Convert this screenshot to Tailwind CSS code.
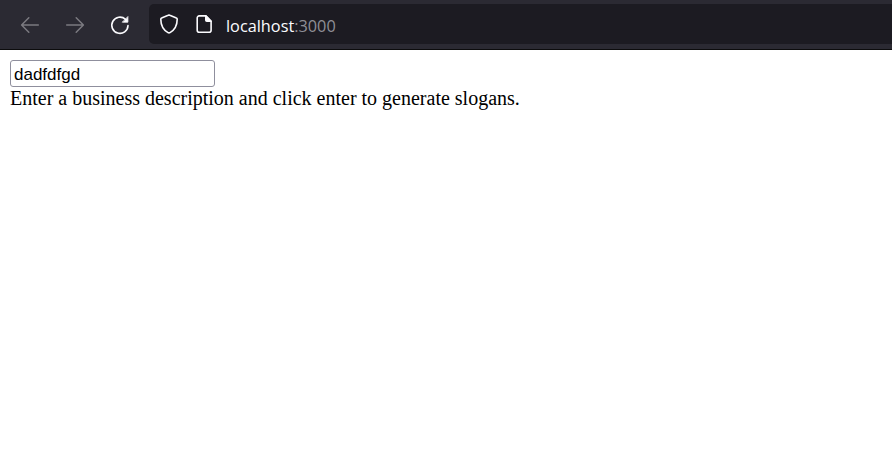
<!DOCTYPE html>
<html lang="en">
<head>
<meta charset="utf-8">
<title>localhost:3000</title>
<script src="https://cdn.jsdelivr.net/npm/@tailwindcss/browser@4"></script>
</head>
<body class="h-screen overflow-hidden bg-white">
<header class="flex h-[50px] border-b border-[#0c0c0d] bg-[#2b2a33] pt-1">
  <nav class="flex h-10 w-[149px] shrink-0 items-center gap-[25px] pl-5 pt-px">
    <svg class="size-5 text-[#7b7a80]" viewBox="0 0 20 20" fill="none" stroke="currentColor" stroke-width="1.5" stroke-linecap="round" stroke-linejoin="round"><path d="M18.3 10H1.8M8.8 2.8L1.6 10l7.2 7.2"/></svg>
    <svg class="size-5 text-[#7b7a80]" viewBox="0 0 20 20" fill="none" stroke="currentColor" stroke-width="1.5" stroke-linecap="round" stroke-linejoin="round"><path d="M1.7 10h16.5M11.2 2.8l7.2 7.2-7.2 7.2"/></svg>
    <svg class="size-5 text-[#fbfbfe]" viewBox="0 0 20 20" fill="none" stroke="currentColor" stroke-width="1.6" stroke-linecap="round" stroke-linejoin="round"><path d="M18 10.5a8.1 8.1 0 1 1-2.500-6.100l1.200 1.200"/><path d="M17.900 1.900v5.300h-5.300z" fill="currentColor" stroke-width=".8"/></svg>
  </nav>
  <div class="flex h-10 flex-1 items-center rounded-l-[5px] bg-[#1c1b22] pl-[10px]">
    <svg class="size-5 text-[#fbfbfe]" viewBox="0 0 20 20" fill="none" stroke="currentColor" stroke-width="1.6" stroke-linejoin="round"><path d="M9.200 1.300Q10 .9 10.800 1.300L17.400 4q.8.3.8 1.200c0 6.200-2.100 10.400-7.200 13.400q-1 .6-2 0C3.900 15.600 1.800 11.400 1.800 5.200q0-.9.8-1.200z"/></svg>
    <svg class="ml-[15px] size-5 text-[#fbfbfe]" viewBox="0 0 20 20" fill="none" stroke="currentColor" stroke-width="1.6" stroke-linejoin="round"><path d="M5.200 1.900h6.600l5.300 5.300v9a2 2 0 0 1-2 2H5.200a2 2 0 0 1-2-2V3.900a2 2 0 0 1 2-2z"/><path d="M11.800 1.900v4.300a1 1 0 0 0 1 1h4.300z" fill="currentColor"/></svg>
    <span class="ml-3 pt-[3px] font-['Open_Sans',sans-serif] text-[16.3px] leading-6 text-[#fbfbfe]">localhost<span class="text-[#8f8f96]">:3000</span></span>
  </div>
</header>
<main class="flex flex-col items-start px-[10px] pt-[10px]">
  <input type="text" value="dadfdfgd" class="h-[27px] w-[205px] rounded-[3px] border border-[#8f8f9d] bg-white px-[3px] pt-[3px] font-['Liberation_Sans',sans-serif] text-[17px] text-black">
  <p class="font-['Liberation_Serif',serif] text-[20px] leading-[23px] text-black">Enter a business description and click enter to generate slogans.</p>
</main>
</body>
</html>
